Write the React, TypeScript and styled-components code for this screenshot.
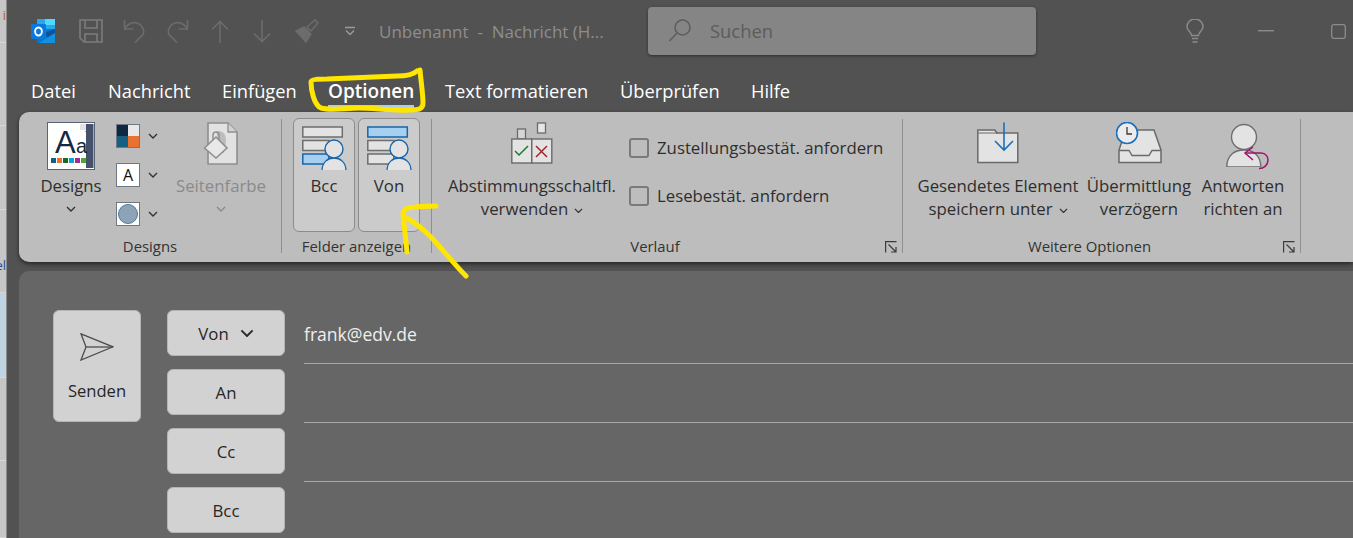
import React from 'react';
import styled, { createGlobalStyle } from 'styled-components';

const GlobalStyle = createGlobalStyle`
  html, body {
    margin: 0;
    padding: 0;
    background: #525252;
    font-family: "Open Sans", "Noto Sans", sans-serif;
  }
  * { box-sizing: border-box; }
`;

const Chevron = ({ size = 10, color = '#333' }: { size?: number; color?: string }) => (
  <svg width={size} height={size * 0.6} viewBox="0 0 10 6" fill="none">
    <path d="M1 1l4 4 4-4" stroke={color} strokeWidth="1.4" />
  </svg>
);

const Launcher = () => (
  <svg width="12" height="12" viewBox="0 0 12 12" fill="none" stroke="#3a3a3a" strokeWidth="1.2">
    <path d="M11.5 .6H.6v10.9" />
    <path d="M3.5 3.5l7 7M11 6v5H6" />
  </svg>
);

const OutlookLogo = () => (
  <svg width="24" height="24" viewBox="0 0 24 24">
    <rect x="6" y="0" width="18" height="12" fill="#28a8ea" />
    <rect x="14" y="0" width="10" height="6" fill="#50d9ff" />
    <path d="M6 10h18v14H7.5A1.5 1.5 0 0 1 6 22.5z" fill="#0078d4" />
    <path d="M24 10v4l-7 4-6-3z" fill="#14447d" opacity=".7" />
    <path d="M24 14v10H8z" fill="#1490df" />
    <rect x="0" y="5" width="15" height="15" rx="1" fill="#0a78dc" />
    <ellipse cx="7.5" cy="12.5" rx="3.4" ry="4" fill="none" stroke="#fff" strokeWidth="1.9" />
  </svg>
);

const SaveIcon = () => (
  <svg width="24" height="24" viewBox="0 0 24 24" fill="none" stroke="#7c7c7c" strokeWidth="1.6">
    <path d="M1 1h22v22H5l-4-4z" />
    <path d="M6 1v8h12V1M6 23v-8h12v8" />
  </svg>
);

const UndoIcon = ({ flip }: { flip?: boolean }) => (
  <svg width="22" height="24" viewBox="0 0 22 24" fill="none" stroke="#6c6c6c" strokeWidth="1.6">
    <g transform={flip ? 'translate(22 0) scale(-1 1)' : undefined}>
      <path d="M1.5 1v9h9" />
      <path d="M1.5 10C5 4.5 10 3 14 4c5 1.500 8 7 6 11.500L12 23.500" />
    </g>
  </svg>
);

const ArrowIcon = ({ down }: { down?: boolean }) => (
  <svg width="18" height="23" viewBox="0 0 18 23" fill="none" stroke="#6c6c6c" strokeWidth="1.6">
    <path d="M9 23V1.500M1 9.500l8-8 8 8" transform={down ? 'rotate(180 9 11.5)' : undefined} />
  </svg>
);

const BrushIcon = () => (
  <svg width="24" height="24" viewBox="0 0 24 24" fill="none" stroke="#6c6c6c" strokeWidth="1.5">
    <path d="M1 12l10 11 5-8-7-7z" fill="#6c6c6c" />
    <path d="M12 8l8-7 3 3-7 8z" />
  </svg>
);

const QuickDrop = () => (
  <svg width="10" height="10" viewBox="0 0 10 10" fill="none" stroke="#9a9a9a" strokeWidth="1.4">
    <path d="M0 1.500h10M1 4.500l4 4 4-4" />
  </svg>
);

const SearchIcon = () => (
  <svg width="24" height="24" viewBox="0 0 24 24" fill="none" stroke="#5c5c5c" strokeWidth="1.5">
    <circle cx="14.500" cy="8.500" r="7.500" />
    <path d="M9 14L1.500 22" />
  </svg>
);

const BulbIcon = () => (
  <svg width="18" height="24" viewBox="0 0 18 24" fill="none" stroke="#8c8c8c" strokeWidth="1.4">
    <path d="M5.500 16.500C5 12.500 1 11.500 1 8a8 8 0 0 1 16 0c0 3.500-4 4.500-4.500 8.500z" />
    <path d="M6 19.500h6M6.500 23h5" />
  </svg>
);

const DesignsIcon = () => (
  <svg width="48" height="48" viewBox="0 0 48 48">
    <rect x=".5" y=".5" width="47" height="47" fill="#fff" stroke="#5a6478" />
    <path d="M39 2h7.500v44H39V10l-1-1h1z" fill="#45516b" />
    <path d="M33 2h6v6h-6z" fill="#e4e4e4" />
    <text x="8" y="31" fontFamily="'Liberation Sans', sans-serif" fontSize="31" fill="#14283f">A</text>
    <text x="29" y="31" fontFamily="'Liberation Sans', sans-serif" fontSize="20" fill="#14283f">a</text>
    {['#156082', '#e97132', '#196b24', '#0f9ed5', '#a02b93', '#4ea72e'].map((c, i) => (
      <rect key={c} x={4 + i * 6} y="36" width="5" height="5" fill={c} />
    ))}
  </svg>
);

const PageColorIcon = () => (
  <svg width="36" height="44" viewBox="0 0 36 44">
    <path d="M5 1h20l9 9v32H5z" fill="#e2e2e2" stroke="#8e8e8e" strokeWidth="1.600" />
    <path d="M25 1v9h9" fill="#d2d2d2" stroke="#8e8e8e" strokeWidth="1.300" />
    <path d="M13 10c5-3 10 1 10 8s-2 12-3 14l-5-16z" fill="#bdbdbd" />
    <path d="M1.500 26L13 15l11 11-11 10z" fill="#e8e8e8" stroke="#8e8e8e" strokeWidth="1.600" />
    <path d="M10 18v-5c0-4 6-4 6 0v5" fill="none" stroke="#8e8e8e" strokeWidth="1.500" />
  </svg>
);

const FieldsIcon = ({ active }: { active: number }) => {
  const row = (y: number, w: number, on: boolean) => (
    <rect
      x=".8" y={y} width={w} height="10"
      fill={on ? '#a6d0f2' : '#e3e3e3'}
      stroke={on ? '#1a64a8' : '#6e6e6e'}
      strokeWidth="1.500"
    />
  );
  return (
    <svg width="45" height="45" viewBox="0 0 45 45">
      {row(1, 39.500, active === 0)}
      {row(14.500, 26, false)}
      {row(28, 26, active === 2)}
      <path d="M20 45c0-9 6-13 12-13s12 4 12 13z" fill="#e3e3e3" stroke="#1a64a8" strokeWidth="1.300" />
      <rect x="19" y="44" width="26" height="1.500" fill="#cbcbcb" />
      <circle cx="32" cy="23" r="9" fill="#e3e3e3" stroke="#1a64a8" strokeWidth="1.400" />
    </svg>
  );
};

const VoteIcon = () => (
  <svg width="42" height="42" viewBox="0 0 42 42" fill="none">
    <rect x="6.500" y="7" width="8" height="10" fill="#d6d6d6" stroke="#6a6a6a" strokeWidth="1.300" />
    <rect x="26.500" y="1" width="8" height="10" fill="#e6e6e6" stroke="#6a6a6a" strokeWidth="1.300" />
    <rect x=".8" y="17" width="20" height="24" fill="#e3e3e3" stroke="#6a6a6a" strokeWidth="1.400" />
    <rect x="20.800" y="17" width="20" height="24" fill="#e3e3e3" stroke="#6a6a6a" strokeWidth="1.400" />
    <path d="M4 29l4 4 9-9" stroke="#1b7a2c" strokeWidth="1.500" />
    <path d="M25 24l11 11M36 24L25 35" stroke="#a5252c" strokeWidth="1.500" />
  </svg>
);

const SaveSentIcon = () => (
  <svg width="42" height="42" viewBox="0 0 42 42" fill="none">
    <path d="M.8 8h17l2 3h21v29.500H.8z" fill="#e3e3e3" stroke="#6a6a6a" strokeWidth="1.500" />
    <path d="M.8 11h20" stroke="#6a6a6a" strokeWidth="1" />
    <path d="M27 .5v27M18 19l9 9 9-9" stroke="#1a70bc" strokeWidth="1.600" />
  </svg>
);

const DelayIcon = () => (
  <svg width="46" height="42" viewBox="0 0 46 42" fill="none">
    <path d="M11 8h27l7 20v12.500H3V28l4-12z" fill="#e3e3e3" stroke="#6a6a6a" strokeWidth="1.500" />
    <path d="M3 28.500h10l3 5h17l3-5h9" stroke="#6a6a6a" strokeWidth="1.400" />
    <circle cx="11" cy="11" r="10.500" fill="#ececec" stroke="#1a70bc" strokeWidth="1.600" />
    <path d="M11 5v7h5" stroke="#3a3a3a" strokeWidth="1.300" />
  </svg>
);

const ReplyToIcon = () => (
  <svg width="52" height="48" viewBox="-9 0 52 48" fill="none">
    <path d="M.8 45c0-12 8-17 17-17s17 5 17 17z" fill="#e3e3e3" stroke="#6e6e6e" strokeWidth="1.400" />
    <rect x="0" y="45" width="36" height="2" fill="#bdbdbd" />
    <circle cx="18" cy="15" r="12.500" fill="#e3e3e3" stroke="#6e6e6e" strokeWidth="1.400" />
    <path d="M27 25l-8 6 8 7" stroke="#a3116d" strokeWidth="1.500" />
    <path d="M19 31h16c5 0 7 4 7 7 0 5-4 8.500-9 8.500" stroke="#a3116d" strokeWidth="1.500" />
  </svg>
);

const SendIcon = () => (
  <svg width="34" height="28" viewBox="0 0 34 28" fill="none" stroke="#4c4c4c" strokeWidth="1.300">
    <path d="M1 .8l32 13L1 27l5-13z" />
    <path d="M6 14h27" />
  </svg>
);

const Page = styled.div`
  position: relative;
  display: flex;
  width: 1353px;
  height: 538px;
  overflow: hidden;
`;

const Strip = styled.div`
  width: 7px;
  flex: none;
  display: flex;
  flex-direction: column;
  background: #c6c6c6;
  border-right: 1px solid #8d8d8d;
`;

const StripRow = styled.div<{ $h: number; $bg?: string; $color?: string }>`
  height: ${(p) => p.$h}px;
  flex: none;
  background: ${(p) => p.$bg || 'transparent'};
  border-bottom: 1px solid #d6d6d6;
  overflow: hidden;
  font-size: 13px;
  line-height: 1;
  color: ${(p) => p.$color || '#333'};
  display: flex;
  align-items: flex-end;
  justify-content: flex-end;
  padding-bottom: 20px;
`;

const Win = styled.div`
  flex: 1;
  min-width: 0;
  display: flex;
  flex-direction: column;
  background: #525252;
`;

const TitleBar = styled.div`
  height: 62px;
  flex: none;
  display: flex;
  align-items: center;
  padding-left: 24px;
`;

const Quick = styled.span<{ $gap?: number }>`
  display: flex;
  flex: none;
  margin-left: ${(p) => p.$gap || 0}px;
`;

const DocTitle = styled.div`
  width: 269px;
  margin-left: 24px;
  flex: none;
  font-size: 17px;
  color: #8e8e8e;
  white-space: pre;
`;

const SearchBox = styled.div`
  width: 388px;
  height: 48px;
  flex: none;
  margin-top: -1px;
  display: flex;
  align-items: center;
  gap: 18px;
  padding-left: 20px;
  background: #858585;
  border-radius: 4px;
  box-shadow: 0 1px 3px rgba(0, 0, 0, 0.45);
  font-size: 18.4px;
  color: #5c5c5c;
`;

const TabBar = styled.div`
  height: 50px;
  flex: none;
  display: flex;
  padding: 17px 0 0 24px;
`;

const Tab = styled.div<{ $w: number; $active?: boolean }>`
  position: relative;
  width: ${(p) => p.$w}px;
  flex: none;
  height: 24px;
  line-height: 24px;
  font-size: ${(p) => (p.$active ? 19 : 18.3)}px;
  font-weight: ${(p) => (p.$active ? 600 : 400)};
  color: #fff;
  white-space: nowrap;
  span {
    display: inline-block;
    height: 29px;
    border-bottom: ${(p) => (p.$active ? '3px solid #a9cdeb' : 'none')};
  }
`;

const Ribbon = styled.div`
  margin-left: 12px;
  height: 150px;
  flex: none;
  display: flex;
  background: #bdbdbd;
  border-radius: 10px 0 0 10px;
  box-shadow: 0 2px 4px rgba(0, 0, 0, 0.55);
  color: #2e2e2e;
  font-size: 16.8px;
`;

const Group = styled.div<{ $w: number }>`
  position: relative;
  width: ${(p) => p.$w}px;
  flex: none;
  display: flex;
  flex-direction: column;
`;

const GroupBody = styled.div<{ $pad: number; $gap?: number }>`
  flex: 1;
  display: flex;
  align-items: flex-start;
  gap: ${(p) => p.$gap || 0}px;
  padding: 7px 0 0 ${(p) => p.$pad}px;
`;

const GroupLabel = styled.div<{ $launcher?: boolean }>`
  height: 30px;
  flex: none;
  padding: 4px ${(p) => (p.$launcher ? 24 : 0)}px 0 0;
  text-align: center;
  font-size: 14.9px;
  line-height: 20px;
  color: #333;
  white-space: nowrap;
`;

const LauncherSlot = styled.div`
  position: absolute;
  right: 5px;
  bottom: 9px;
  display: flex;
`;

const Separator = styled.div`
  width: 1px;
  flex: none;
  margin: 7px 0 9px;
  background: #8f8f8f;
`;

const LargeButton = styled.div<{ $w: number; $muted?: boolean; $ml?: number }>`
  width: ${(p) => p.$w}px;
  flex: none;
  margin-left: ${(p) => p.$ml || 0}px;
  display: flex;
  flex-direction: column;
  align-items: center;
  text-align: center;
  line-height: 23px;
  white-space: nowrap;
  color: ${(p) => (p.$muted ? '#8a8a8a' : 'inherit')};
`;

const IconSlot = styled.div`
  height: 55px;
  display: flex;
  align-items: flex-start;
  justify-content: center;
  padding-top: 3px;
`;

const ChevronLine = styled.div`
  height: 23px;
  display: flex;
  align-items: center;
`;

const InlineChevron = styled.span`
  display: inline-flex;
  margin-left: 6px;
  vertical-align: 2px;
`;

const SmallColumn = styled.div`
  margin-left: 5px;
  display: flex;
  flex-direction: column;
  gap: 15px;
  padding-top: 5px;
`;

const SwatchRow = styled.div`
  display: flex;
  align-items: center;
  gap: 8px;
`;

const Swatch = styled.div`
  width: 24px;
  height: 24px;
  flex: none;
  border: 1px solid #6f7785;
  background: #fff;
  display: flex;
  align-items: center;
  justify-content: center;
  overflow: hidden;
  font-size: 16px;
  color: #111;
`;

const Quad = styled.div`
  width: 100%;
  height: 100%;
  display: grid;
  grid-template-columns: 1fr 1fr;
  grid-template-rows: 1fr 1fr;
`;

const QuadCell = styled.div<{ $bg: string }>`
  background: ${(p) => p.$bg};
`;

const Dot = styled.div`
  width: 20px;
  height: 20px;
  border-radius: 50%;
  background: #8fa3b8;
  border: 1px solid #4b7d99;
`;

const FieldToggle = styled.div`
  width: 62px;
  height: 114px;
  flex: none;
  margin-top: -1px;
  display: flex;
  flex-direction: column;
  align-items: center;
  padding-top: 7px;
  background: #cbcbcb;
  border: 1px solid #8c8c8c;
  border-radius: 6px;
  line-height: 23px;
`;

const FieldIconSlot = styled.div`
  height: 48px;
  display: flex;
`;

const CheckColumn = styled.div`
  margin-left: 9px;
  display: flex;
  flex-direction: column;
  gap: 28px;
  padding-top: 19px;
`;

const CheckRow = styled.div`
  display: flex;
  align-items: center;
  gap: 8px;
  height: 20px;
  white-space: nowrap;
`;

const CheckLabel = styled.span`
  margin-top: -2px;
`;

const CheckBox = styled.div`
  width: 20px;
  height: 20px;
  flex: none;
  border: 2px solid #7a7a7a;
  border-radius: 3px;
`;

const Compose = styled.div`
  margin: 9px 0 0 12px;
  flex: 1;
  min-height: 0;
  display: flex;
  align-items: flex-start;
  padding: 39px 0 0 34px;
  background: #666;
  border-radius: 10px 0 0 0;
`;

const SendButton = styled.div`
  width: 88px;
  height: 112px;
  flex: none;
  display: flex;
  flex-direction: column;
  align-items: center;
  padding-top: 22px;
  gap: 18px;
  background: #d2d2d2;
  border: 1px solid #b4b4b4;
  border-radius: 6px;
  font-size: 16.6px;
  color: #262626;
`;

const AddressColumn = styled.div`
  width: 118px;
  flex: none;
  margin-left: 26px;
  display: flex;
  flex-direction: column;
  gap: 13px;
`;

const AddressButton = styled.div`
  height: 46px;
  display: flex;
  align-items: center;
  justify-content: center;
  gap: 11px;
  background: #d2d2d2;
  border: 1px solid #b4b4b4;
  border-radius: 6px;
  font-size: 16.8px;
  color: #262626;
`;

const FieldColumn = styled.div`
  flex: 1;
  min-width: 0;
  margin: -5px 0 0 19px;
`;

const FieldRow = styled.div`
  height: 59px;
  display: flex;
  align-items: center;
  border-bottom: 1px solid #a8a8a8;
  font-size: 17.5px;
  color: #efefef;
`;

const Scribble = styled.svg`
  position: absolute;
  top: 0;
  left: 0;
  pointer-events: none;
`;

export default function App() {
  return (
    <Page>
      <GlobalStyle />
      <Strip>
        <StripRow $h={43} $color="#b5621b">i</StripRow>
        <StripRow $h={83} />
        <StripRow $h={84} />
        <StripRow $h={83} $color="#1f4e8c">el</StripRow>
        <StripRow $h={85} $bg="#bfd3e0" />
        <StripRow $h={83} />
        <StripRow $h={77} />
      </Strip>
      <Win>
        <TitleBar>
          <Quick><OutlookLogo /></Quick>
          <Quick $gap={24}><SaveIcon /></Quick>
          <Quick $gap={20}><UndoIcon /></Quick>
          <Quick $gap={22}><UndoIcon flip /></Quick>
          <Quick $gap={22}><ArrowIcon /></Quick>
          <Quick $gap={24}><ArrowIcon down /></Quick>
          <Quick $gap={24}><BrushIcon /></Quick>
          <Quick $gap={26}><QuickDrop /></Quick>
          <DocTitle>Unbenannt  -  Nachricht (H...</DocTitle>
          <SearchBox>
            <SearchIcon />
            Suchen
          </SearchBox>
          <Quick $gap={150}><BulbIcon /></Quick>
          <Quick $gap={54}>
            <svg width="16" height="2" viewBox="0 0 16 2"><rect width="16" height="1.400" fill="#8c8c8c" /></svg>
          </Quick>
          <Quick $gap={57}>
            <svg width="15" height="15" viewBox="0 0 15 15" fill="none" stroke="#8c8c8c" strokeWidth="1.300">
              <rect x=".7" y=".7" width="13.600" height="13.600" rx="2" />
            </svg>
          </Quick>
        </TitleBar>
        <TabBar>
          <Tab $w={77}><span>Datei</span></Tab>
          <Tab $w={114}><span>Nachricht</span></Tab>
          <Tab $w={106}><span>Einfügen</span></Tab>
          <Tab $w={117} $active><span>Optionen</span></Tab>
          <Tab $w={175}><span>Text formatieren</span></Tab>
          <Tab $w={131}><span>Überprüfen</span></Tab>
          <Tab $w={60}><span>Hilfe</span></Tab>
        </TabBar>
        <Ribbon>
          <Group $w={262}>
            <GroupBody $pad={12}>
              <LargeButton $w={80}>
                <IconSlot><DesignsIcon /></IconSlot>
                Designs
                <ChevronLine><Chevron /></ChevronLine>
              </LargeButton>
              <SmallColumn>
                <SwatchRow>
                  <Swatch>
                    <Quad>
                      <QuadCell $bg="#0e2841" />
                      <QuadCell $bg="#e8e8e8" />
                      <QuadCell $bg="#156082" />
                      <QuadCell $bg="#e97132" />
                    </Quad>
                  </Swatch>
                  <Chevron />
                </SwatchRow>
                <SwatchRow>
                  <Swatch>A</Swatch>
                  <Chevron />
                </SwatchRow>
                <SwatchRow>
                  <Swatch><Dot /></Swatch>
                  <Chevron />
                </SwatchRow>
              </SmallColumn>
              <LargeButton $w={90} $muted $ml={18}>
                <IconSlot><PageColorIcon /></IconSlot>
                Seitenfarbe
                <ChevronLine><Chevron color="#8a8a8a" /></ChevronLine>
              </LargeButton>
            </GroupBody>
            <GroupLabel>Designs</GroupLabel>
          </Group>
          <Separator />
          <Group $w={149}>
            <GroupBody $pad={11} $gap={3}>
              <FieldToggle>
                <FieldIconSlot><FieldsIcon active={2} /></FieldIconSlot>
                Bcc
              </FieldToggle>
              <FieldToggle>
                <FieldIconSlot><FieldsIcon active={0} /></FieldIconSlot>
                Von
              </FieldToggle>
            </GroupBody>
            <GroupLabel>Felder anzeigen</GroupLabel>
          </Group>
          <Separator />
          <Group $w={470}>
            <GroupBody $pad={12}>
              <LargeButton $w={176}>
                <IconSlot><VoteIcon /></IconSlot>
                Abstimmungsschaltfl.
                <span>verwenden<InlineChevron><Chevron size={9} /></InlineChevron></span>
              </LargeButton>
              <CheckColumn>
                <CheckRow><CheckBox /><CheckLabel>Zustellungsbestät. anfordern</CheckLabel></CheckRow>
                <CheckRow><CheckBox /><CheckLabel>Lesebestät. anfordern</CheckLabel></CheckRow>
              </CheckColumn>
            </GroupBody>
            <GroupLabel $launcher>Verlauf</GroupLabel>
            <LauncherSlot><Launcher /></LauncherSlot>
          </Group>
          <Separator />
          <Group $w={397}>
            <GroupBody $pad={11}>
              <LargeButton $w={168}>
                <IconSlot><SaveSentIcon /></IconSlot>
                Gesendetes Element
                <span>speichern unter<InlineChevron><Chevron size={9} /></InlineChevron></span>
              </LargeButton>
              <LargeButton $w={114}>
                <IconSlot><DelayIcon /></IconSlot>
                Übermittlung
                <span>verzögern</span>
              </LargeButton>
              <LargeButton $w={94}>
                <IconSlot><ReplyToIcon /></IconSlot>
                Antworten
                <span>richten an</span>
              </LargeButton>
            </GroupBody>
            <GroupLabel $launcher>Weitere Optionen</GroupLabel>
            <LauncherSlot><Launcher /></LauncherSlot>
          </Group>
          <Separator />
        </Ribbon>
        <Compose>
          <SendButton>
            <SendIcon />
            Senden
          </SendButton>
          <AddressColumn>
            <AddressButton>Von <Chevron size={14} color="#2a2a2a" /></AddressButton>
            <AddressButton>An</AddressButton>
            <AddressButton>Cc</AddressButton>
            <AddressButton>Bcc</AddressButton>
          </AddressColumn>
          <FieldColumn>
            <FieldRow>frank@edv.de</FieldRow>
            <FieldRow />
            <FieldRow />
          </FieldColumn>
        </Compose>
      </Win>
      <Scribble width="1353" height="538" viewBox="0 0 1353 538" fill="none" stroke="#ffe600" strokeWidth="5" strokeLinecap="round" strokeLinejoin="round">
        <path d="M420 70c1 12 3 24 3 33 0 6-4 7-14 7-18 1-34-2-50-2-14 0-28 3-38 0-7-3-10-18-10-26 0-3 8-3 16-3 22-1 48-2 70-3 8 0 16-1 20-5" />
        <path d="M436 206c-10 0-22 1-28 2-3 1-5 3-5 6 1 12 3 26 4 38" />
        <path d="M405 217c9 5 18 12 26 20 12 13 23 27 35 39" />
      </Scribble>
    </Page>
  );
}
